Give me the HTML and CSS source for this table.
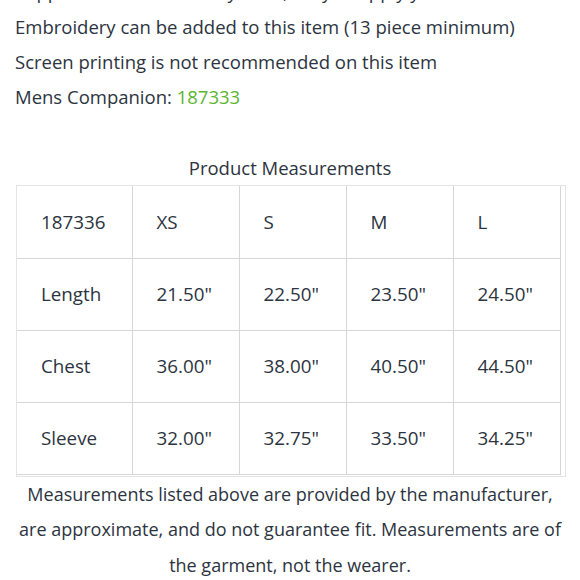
FILE: index.html
```html
<!DOCTYPE html>
<html>
<head>
<meta charset="utf-8">
<link rel="stylesheet" href="styles.css">
</head>
<body>
<div class="page">
  <p class="line">Supplied with a tear-away label, easy to apply your own</p>
  <p class="line">Embroidery can be added to this item (13 piece minimum)</p>
  <p class="line">Screen printing is not recommended on this item</p>
  <p class="line">Mens Companion: <span class="green">187333</span></p>

  <section class="measure">
    <h3 class="caption">Product Measurements</h3>
    <div class="table-wrap">
      <table class="sizes">
        <tr><td class="first">187336</td><td>XS</td><td>S</td><td>M</td><td>L</td></tr>
        <tr><td class="first">Length</td><td>21.50"</td><td>22.50"</td><td>23.50"</td><td>24.50"</td></tr>
        <tr><td class="first">Chest</td><td>36.00"</td><td>38.00"</td><td>40.50"</td><td>44.50"</td></tr>
        <tr><td class="first">Sleeve</td><td>32.00"</td><td>32.75"</td><td>33.50"</td><td>34.25"</td></tr>
      </table>
    </div>
    <p class="note">Measurements listed above are provided by the manufacturer, are approximate, and do not guarantee fit. Measurements are of the garment, not the wearer.</p>
  </section>
</div>
</body>
</html>
```

FILE: styles.css
```css
html, body {
  margin: 0;
  padding: 0;
  background: #ffffff;
}

body {
  font-family: "Open Sans", "Noto Sans", sans-serif;
  color: #2c3440;
  overflow: hidden;
}

.page {
  margin-top: -26px;
  padding: 0 15px 0 15px;
}

.line {
  margin: 0;
  font-size: 18.5px;
  line-height: 35px;
  white-space: nowrap;
}

.green {
  color: #5cb531;
}

.measure {
  margin-top: 36px;
}

.caption {
  margin: 0;
  font-weight: normal;
  font-size: 18.5px;
  line-height: 35px;
  text-align: center;
}

.table-wrap {
  margin-left: 1px;
  width: 543px;
  border: 1px solid #e4e4e4;
  padding: 0 5px 1px 0;
}

.sizes {
  border-collapse: collapse;
  width: 543px;
  table-layout: fixed;
}

.sizes td {
  height: 72px;
  padding: 0 0 0 24px;
  border-right: 1px solid #d6d6d6;
  border-bottom: 1px solid #d6d6d6;
  font-size: 18.8px;
  vertical-align: middle;
  width: 107px;
  box-sizing: border-box;
}

.sizes td.first {
  width: 115px;
}

.note {
  margin: 0;
  font-size: 18px;
  line-height: 35.5px;
  text-align: center;
}
```
